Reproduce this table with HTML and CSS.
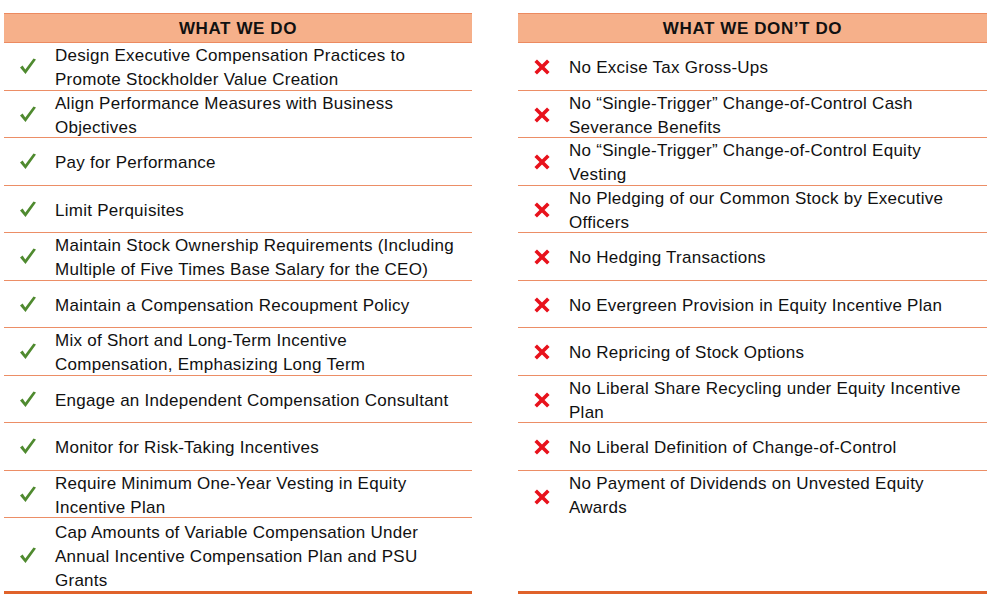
FILE: index.html
```html
<!DOCTYPE html>
<html>
<head>
<meta charset="utf-8">
<link rel="stylesheet" href="styles.css">
</head>
<body>
<div class="page">
  <div class="table">
    <div class="head">WHAT WE DO</div>
    <div class="row"><span class="ico"><svg viewBox="0 0 20 20" class="check"><path d="M2 10.5 L7.5 17 L18 2.5 L15.5 1.5 L7.3 12.6 L4.6 8.6 Z"/></svg></span><span class="txt">Design Executive Compensation Practices to<br>Promote Stockholder Value Creation</span></div>
    <div class="row"><span class="ico"><svg viewBox="0 0 20 20" class="check"><path d="M2 10.5 L7.5 17 L18 2.5 L15.5 1.5 L7.3 12.6 L4.6 8.6 Z"/></svg></span><span class="txt">Align Performance Measures with Business<br>Objectives</span></div>
    <div class="row"><span class="ico"><svg viewBox="0 0 20 20" class="check"><path d="M2 10.5 L7.5 17 L18 2.5 L15.5 1.5 L7.3 12.6 L4.6 8.6 Z"/></svg></span><span class="txt">Pay for Performance</span></div>
    <div class="row"><span class="ico"><svg viewBox="0 0 20 20" class="check"><path d="M2 10.5 L7.5 17 L18 2.5 L15.5 1.5 L7.3 12.6 L4.6 8.6 Z"/></svg></span><span class="txt">Limit Perquisites</span></div>
    <div class="row"><span class="ico"><svg viewBox="0 0 20 20" class="check"><path d="M2 10.5 L7.5 17 L18 2.5 L15.5 1.5 L7.3 12.6 L4.6 8.6 Z"/></svg></span><span class="txt">Maintain Stock Ownership Requirements (Including<br>Multiple of Five Times Base Salary for the CEO)</span></div>
    <div class="row"><span class="ico"><svg viewBox="0 0 20 20" class="check"><path d="M2 10.5 L7.5 17 L18 2.5 L15.5 1.5 L7.3 12.6 L4.6 8.6 Z"/></svg></span><span class="txt">Maintain a Compensation Recoupment Policy</span></div>
    <div class="row"><span class="ico"><svg viewBox="0 0 20 20" class="check"><path d="M2 10.5 L7.5 17 L18 2.5 L15.5 1.5 L7.3 12.6 L4.6 8.6 Z"/></svg></span><span class="txt">Mix of Short and Long-Term Incentive<br>Compensation, Emphasizing Long Term</span></div>
    <div class="row"><span class="ico"><svg viewBox="0 0 20 20" class="check"><path d="M2 10.5 L7.5 17 L18 2.5 L15.5 1.5 L7.3 12.6 L4.6 8.6 Z"/></svg></span><span class="txt">Engage an Independent Compensation Consultant</span></div>
    <div class="row"><span class="ico"><svg viewBox="0 0 20 20" class="check"><path d="M2 10.5 L7.5 17 L18 2.5 L15.5 1.5 L7.3 12.6 L4.6 8.6 Z"/></svg></span><span class="txt">Monitor for Risk-Taking Incentives</span></div>
    <div class="row"><span class="ico"><svg viewBox="0 0 20 20" class="check"><path d="M2 10.5 L7.5 17 L18 2.5 L15.5 1.5 L7.3 12.6 L4.6 8.6 Z"/></svg></span><span class="txt">Require Minimum One-Year Vesting in Equity<br>Incentive Plan</span></div>
    <div class="row last left-last"><span class="ico"><svg viewBox="0 0 20 20" class="check"><path d="M2 10.5 L7.5 17 L18 2.5 L15.5 1.5 L7.3 12.6 L4.6 8.6 Z"/></svg></span><span class="txt">Cap Amounts of Variable Compensation Under<br>Annual Incentive Compensation Plan and PSU<br>Grants</span></div>
  </div>
  <div class="table right">
    <div class="head">WHAT WE DON’T DO</div>
    <div class="row"><span class="ico"><svg viewBox="0 0 20 20" class="cross"><path d="M3 3 L17 17 M17 3 L3 17"/></svg></span><span class="txt">No Excise Tax Gross-Ups</span></div>
    <div class="row"><span class="ico"><svg viewBox="0 0 20 20" class="cross"><path d="M3 3 L17 17 M17 3 L3 17"/></svg></span><span class="txt">No “Single-Trigger” Change-of-Control Cash<br>Severance Benefits</span></div>
    <div class="row"><span class="ico"><svg viewBox="0 0 20 20" class="cross"><path d="M3 3 L17 17 M17 3 L3 17"/></svg></span><span class="txt">No “Single-Trigger” Change-of-Control Equity<br>Vesting</span></div>
    <div class="row"><span class="ico"><svg viewBox="0 0 20 20" class="cross"><path d="M3 3 L17 17 M17 3 L3 17"/></svg></span><span class="txt">No Pledging of our Common Stock by Executive<br>Officers</span></div>
    <div class="row"><span class="ico"><svg viewBox="0 0 20 20" class="cross"><path d="M3 3 L17 17 M17 3 L3 17"/></svg></span><span class="txt">No Hedging Transactions</span></div>
    <div class="row"><span class="ico"><svg viewBox="0 0 20 20" class="cross"><path d="M3 3 L17 17 M17 3 L3 17"/></svg></span><span class="txt">No Evergreen Provision in Equity Incentive Plan</span></div>
    <div class="row"><span class="ico"><svg viewBox="0 0 20 20" class="cross"><path d="M3 3 L17 17 M17 3 L3 17"/></svg></span><span class="txt">No Repricing of Stock Options</span></div>
    <div class="row"><span class="ico"><svg viewBox="0 0 20 20" class="cross"><path d="M3 3 L17 17 M17 3 L3 17"/></svg></span><span class="txt">No Liberal Share Recycling under Equity Incentive<br>Plan</span></div>
    <div class="row"><span class="ico"><svg viewBox="0 0 20 20" class="cross"><path d="M3 3 L17 17 M17 3 L3 17"/></svg></span><span class="txt">No Liberal Definition of Change-of-Control</span></div>
    <div class="row last right-last"><span class="ico"><svg viewBox="0 0 20 20" class="cross"><path d="M3 3 L17 17 M17 3 L3 17"/></svg></span><span class="txt">No Payment of Dividends on Unvested Equity<br>Awards</span></div>
  </div>
</div>
</body>
</html>
```

FILE: styles.css
```css
html, body {
  margin: 0;
  padding: 0;
  background: #ffffff;
}
.page {
  display: flex;
  align-items: flex-start;
  gap: 46px;
  padding: 13px 0 0 4px;
  font-family: "Liberation Sans", Arial, sans-serif;
  font-size: 17px;
  color: #111111;
}
.table {
  width: 468px;
  display: flex;
  flex-direction: column;
}
.table.right {
  width: 469px;
}
.head {
  height: 28px;
  line-height: 29px;
  background: #f6b08a;
  border-top: 1px solid #ec8a60;
  border-bottom: 1px solid #ec8a60;
  text-align: center;
  font-weight: bold;
  font-size: 17px;
  letter-spacing: 0.6px;
  color: #111;
}
.row {
  height: 46.5px;
  border-bottom: 1px solid #ec8e66;
  display: flex;
  align-items: center;
}
.ico {
  width: 51px;
  flex: none;
  display: flex;
  justify-content: center;
  align-items: center;
  padding-right: 4px;
  padding-top: 2px;
  box-sizing: border-box;
}
.txt {
  line-height: 24px;
  letter-spacing: 0.26px;
  padding-top: 4px;
}
.check {
  width: 20px;
  height: 20px;
  fill: #4f8a2f;
}
.cross {
  width: 18px;
  height: 18px;
  stroke: #e8121c;
  stroke-width: 4;
  fill: none;
}
.row.last {
  border-bottom: 3px solid #e0622a;
}
.left-last {
  height: 73px;
}
.right-last {
  height: 120px;
  align-items: flex-start;
}
.right-last .ico {
  height: 50px;
}
.right-last .txt {
  padding-top: 1px;
}
```
